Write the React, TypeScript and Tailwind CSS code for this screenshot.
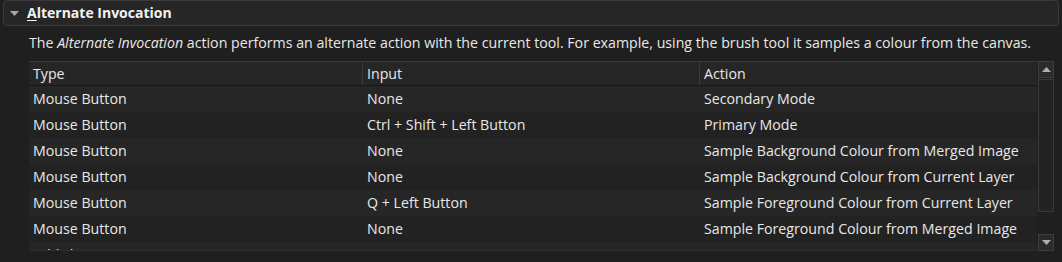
import React from "react";

const rows = [
  ["Mouse Button", "None", "Secondary Mode"],
  ["Mouse Button", "Ctrl + Shift + Left Button", "Primary Mode"],
  ["Mouse Button", "None", "Sample Background Colour from Merged Image"],
  ["Mouse Button", "None", "Sample Background Colour from Current Layer"],
  ["Mouse Button", "Q + Left Button", "Sample Foreground Colour from Current Layer"],
  ["Mouse Button", "None", "Sample Foreground Colour from Merged Image"],
];

export default function App() {
  return (
    <div className="w-[1062px] h-[262px] overflow-hidden bg-[#1f1f1f] text-[#e8e8e8] font-['Open_Sans',sans-serif] text-[14.2px]">
      <div className="mx-[3px] h-[26px] rounded-[4px] border border-[#3a3a3a] bg-[#262626] flex items-center">
        <svg width="9" height="5" viewBox="0 0 9 5" className="ml-[6px] mr-[8px]">
          <polygon points="0,0 9,0 4.5,5" fill="#a8a8a8" />
        </svg>
        <span className="font-bold text-[14px] text-[#f2f2f2] leading-none">
          <span className="underline underline-offset-2">A</span>lternate Invocation
        </span>
      </div>
      <div className="pl-[29px] mt-[7px] h-[28px] leading-[20px]">
        The <i>Alternate Invocation</i> action performs an alternate action with the current tool. For example, using the brush tool it samples a colour from the canvas.
      </div>
      <div className="ml-[29px] flex w-[1026px] h-[190px]">
        <div className="w-[1008px] border-t border-[#3a3a3a] border-b border-b-[#2e2e2e] overflow-hidden bg-[#222222]">
          <div className="flex h-[24px] bg-[#262626] border-b border-[#171717]">
            <div className="w-[334px] pl-[4px] border-r border-[#3a3a3a] flex items-center">Type</div>
            <div className="w-[337px] pl-[4px] border-r border-[#3a3a3a] flex items-center">Input</div>
            <div className="flex-1 pl-[4px] flex items-center">Action</div>
          </div>
          {rows.map((r, i) => (
            <div key={i} className={`flex h-[26px] items-center ${i % 2 === 0 ? "bg-[#262626]" : "bg-[#222222]"}`}>
              <div className="w-[334px] pl-[4px]">{r[0]}</div>
              <div className="w-[337px] pl-[4px]">{r[1]}</div>
              <div className="flex-1 pl-[4px]">{r[2]}</div>
            </div>
          ))}
          <div className="flex h-[26px] items-center bg-[#262626]">
            <div className="w-[334px] pl-[4px]">Add shortcut...</div>
          </div>
        </div>
        <div className="w-[17px] flex flex-col bg-[#1f1f1f] pl-[1px]">
          <div className="h-[17px] border border-[#3e3e3e] bg-[#2a2a2a] flex items-center justify-center">
            <svg width="9" height="5" viewBox="0 0 9 5"><polygon points="4.5,0 9,5 0,5" fill="#b0b0b0" /></svg>
          </div>
          <div className="h-[133px] border border-[#3a3a3a] bg-[#232323] mt-[1px]" />
          <div className="flex-1" />
          <div className="h-[17px] border border-[#3e3e3e] bg-[#2a2a2a] flex items-center justify-center">
            <svg width="9" height="5" viewBox="0 0 9 5"><polygon points="0,0 9,0 4.5,5" fill="#b0b0b0" /></svg>
          </div>
        </div>
      </div>
    </div>
  );
}
